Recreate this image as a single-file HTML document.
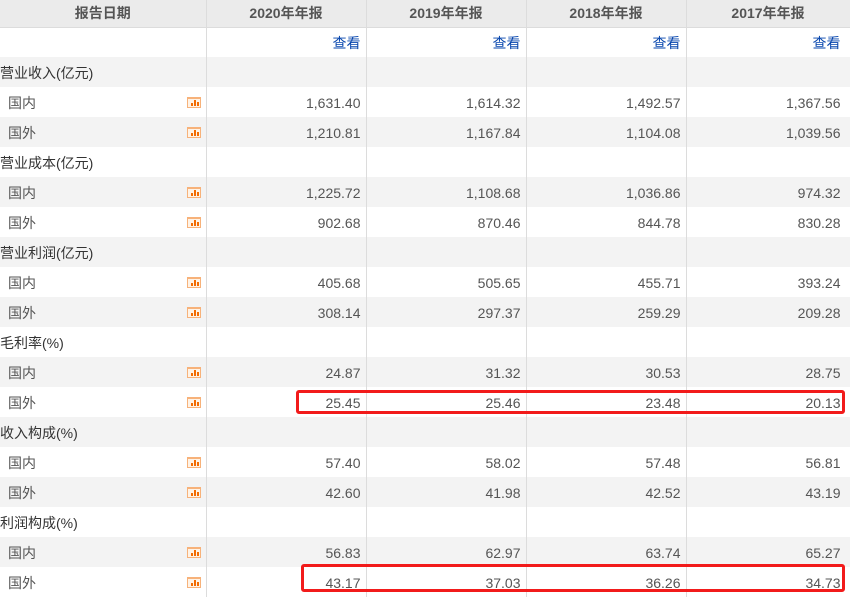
<!DOCTYPE html>
<html><head><meta charset="utf-8"><style>
*{margin:0;padding:0;box-sizing:border-box}
body{width:850px;height:594px;overflow:hidden;background:#fff;font-family:"Liberation Sans","Noto Sans CJK SC",sans-serif;font-size:14px;color:#555;position:relative}
table{border-collapse:collapse;table-layout:fixed;width:850px;position:absolute;left:0;top:0}
td,th{height:30px;border-right:1px solid #dcdcdc;padding:2px 5px 0;text-align:right;white-space:nowrap;overflow:hidden}
td:last-child{padding-right:9px}
th{height:27px;padding:0 5px;background:#ebebeb;color:#555;font-weight:bold;text-align:center;border-bottom:1px solid #dcdcdc}
tr:nth-child(odd) td{background:#f3f3f3}
td.l{text-align:left;padding-left:8px;position:relative}
td.c{text-align:left;padding-left:0;color:#333}
a{color:#0645ad;text-decoration:none}
.ic{position:absolute;left:187px;top:10px;width:14px;height:11px;border:1px solid #f7b27a;border-top-width:2px;background:#fff3e6}
.ic i{position:absolute;bottom:1px;width:2px;background:#f26b00}
.box{position:absolute;border:3px solid #f21b1b;border-radius:3px}
</style></head><body>
<table>
<colgroup><col style="width:206px"><col style="width:160px"><col style="width:160px"><col style="width:160px"><col style="width:164px"></colgroup>
<tr><th>报告日期</th><th>2020年年报</th><th>2019年年报</th><th>2018年年报</th><th>2017年年报</th></tr>
<tr><td></td><td><a>查看</a></td><td><a>查看</a></td><td><a>查看</a></td><td><a>查看</a></td></tr>
<tr><td class="c">营业收入(亿元)</td><td></td><td></td><td></td><td></td></tr>
<tr><td class="l">国内<span class="ic"><i style="left:3px;height:3px"></i><i style="left:6px;height:6px"></i><i style="left:9px;height:4px"></i></span></td><td>1,631.40</td><td>1,614.32</td><td>1,492.57</td><td>1,367.56</td></tr>
<tr><td class="l">国外<span class="ic"><i style="left:3px;height:3px"></i><i style="left:6px;height:6px"></i><i style="left:9px;height:4px"></i></span></td><td>1,210.81</td><td>1,167.84</td><td>1,104.08</td><td>1,039.56</td></tr>
<tr><td class="c">营业成本(亿元)</td><td></td><td></td><td></td><td></td></tr>
<tr><td class="l">国内<span class="ic"><i style="left:3px;height:3px"></i><i style="left:6px;height:6px"></i><i style="left:9px;height:4px"></i></span></td><td>1,225.72</td><td>1,108.68</td><td>1,036.86</td><td>974.32</td></tr>
<tr><td class="l">国外<span class="ic"><i style="left:3px;height:3px"></i><i style="left:6px;height:6px"></i><i style="left:9px;height:4px"></i></span></td><td>902.68</td><td>870.46</td><td>844.78</td><td>830.28</td></tr>
<tr><td class="c">营业利润(亿元)</td><td></td><td></td><td></td><td></td></tr>
<tr><td class="l">国内<span class="ic"><i style="left:3px;height:3px"></i><i style="left:6px;height:6px"></i><i style="left:9px;height:4px"></i></span></td><td>405.68</td><td>505.65</td><td>455.71</td><td>393.24</td></tr>
<tr><td class="l">国外<span class="ic"><i style="left:3px;height:3px"></i><i style="left:6px;height:6px"></i><i style="left:9px;height:4px"></i></span></td><td>308.14</td><td>297.37</td><td>259.29</td><td>209.28</td></tr>
<tr><td class="c">毛利率(%)</td><td></td><td></td><td></td><td></td></tr>
<tr><td class="l">国内<span class="ic"><i style="left:3px;height:3px"></i><i style="left:6px;height:6px"></i><i style="left:9px;height:4px"></i></span></td><td>24.87</td><td>31.32</td><td>30.53</td><td>28.75</td></tr>
<tr><td class="l">国外<span class="ic"><i style="left:3px;height:3px"></i><i style="left:6px;height:6px"></i><i style="left:9px;height:4px"></i></span></td><td>25.45</td><td>25.46</td><td>23.48</td><td>20.13</td></tr>
<tr><td class="c">收入构成(%)</td><td></td><td></td><td></td><td></td></tr>
<tr><td class="l">国内<span class="ic"><i style="left:3px;height:3px"></i><i style="left:6px;height:6px"></i><i style="left:9px;height:4px"></i></span></td><td>57.40</td><td>58.02</td><td>57.48</td><td>56.81</td></tr>
<tr><td class="l">国外<span class="ic"><i style="left:3px;height:3px"></i><i style="left:6px;height:6px"></i><i style="left:9px;height:4px"></i></span></td><td>42.60</td><td>41.98</td><td>42.52</td><td>43.19</td></tr>
<tr><td class="c">利润构成(%)</td><td></td><td></td><td></td><td></td></tr>
<tr><td class="l">国内<span class="ic"><i style="left:3px;height:3px"></i><i style="left:6px;height:6px"></i><i style="left:9px;height:4px"></i></span></td><td>56.83</td><td>62.97</td><td>63.74</td><td>65.27</td></tr>
<tr><td class="l">国外<span class="ic"><i style="left:3px;height:3px"></i><i style="left:6px;height:6px"></i><i style="left:9px;height:4px"></i></span></td><td>43.17</td><td>37.03</td><td>36.26</td><td>34.73</td></tr>
</table>
<div class="box" style="left:296px;top:390px;width:549px;height:24px"></div>
<div class="box" style="left:301px;top:564px;width:544px;height:28px"></div>
</body></html>
